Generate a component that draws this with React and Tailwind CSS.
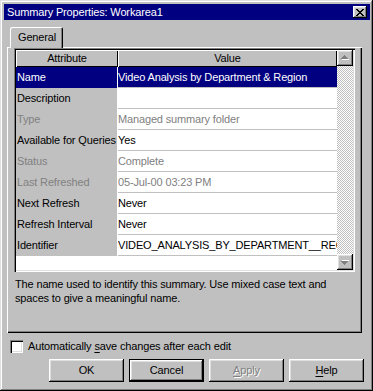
import React from 'react';

const rows = [
  { attr: 'Name', value: 'Video Analysis by Department & Region', selected: true },
  { attr: 'Description', value: '' },
  { attr: 'Type', value: 'Managed summary folder', dim: true },
  { attr: 'Available for Queries', value: 'Yes' },
  { attr: 'Status', value: 'Complete', dim: true },
  { attr: 'Last Refreshed', value: '05-Jul-00 03:23 PM', dim: true },
  { attr: 'Next Refresh', value: 'Never' },
  { attr: 'Refresh Interval', value: 'Never' },
  { attr: 'Identifier', value: 'VIDEO_ANALYSIS_BY_DEPARTMENT__REGION' },
];

const raised = 'shadow-[inset_-1px_-1px_#000,inset_1px_1px_#fff,inset_-2px_-2px_#808080,inset_2px_2px_#dfdfdf]';

const CloseGlyph = () => (
  <svg width="8" height="7" viewBox="0 0 8 7" shapeRendering="crispEdges">
    <path
      fill="#000"
      d="M0 0h2v1h-2z M6 0h2v1h-2z M1 1h2v1h-2z M5 1h2v1h-2z M2 2h4v1h-4z M3 3h2v1h-2z M2 4h4v1h-4z M1 5h2v1h-2z M5 5h2v1h-2z M0 6h2v1h-2z M6 6h2v1h-2z"
    />
  </svg>
);

// Disabled scroll arrow, grey with a white emboss
const Arrow = ({ down }) => (
  <svg width="9" height="6" viewBox="0 0 9 6" shapeRendering="crispEdges">
    <g transform={down ? 'translate(0 6) scale(1 -1)' : undefined}>
      <path fill="#fff" d="M4 1h1v1h1v1h1v1h1v1h-7v-1h1v-1h1v-1h1z" />
      <path fill="#808080" d="M3 0h1v1h1v1h1v1h1v1h-7v-1h1v-1h1v-1h1z" transform="translate(0 0)" />
    </g>
  </svg>
);

const Button = ({ children, isDefault, disabled }) => (
  <div className={`w-[75px] h-[23px] ${isDefault ? 'border border-black' : ''}`}>
    <div className={`w-full h-full flex items-center justify-center ${raised} ${disabled ? 'text-[#808080] [text-shadow:1px_1px_0_#fff]' : 'text-black'}`}>
      {children}
    </div>
  </div>
);

export default function App() {
  return (
    <div className="w-[373px] h-[391px] bg-[#c0c0c0] pt-[4px] pl-[4px] pr-[3px] shadow-[inset_-1px_-1px_#000,inset_1px_1px_#dfdfdf,inset_-2px_-2px_#808080,inset_2px_2px_#fff] font-['Liberation_Sans',Arial,sans-serif] text-[11px] leading-none text-black tracking-[-0.15px] overflow-hidden">
      {/* title bar */}
      <div className="h-[16px] bg-[#000080] flex items-center justify-between pl-[3px] pr-[3px]">
        <span className="text-white text-[11px]">Summary Properties: Workarea1</span>
        <div className={`w-[14px] h-[12px] bg-[#c0c0c0] flex items-center justify-center ${raised}`}>
          <CloseGlyph />
        </div>
      </div>

      {/* tab control */}
      <div className="mt-[7px] ml-[3px] w-[355px]">
        <div className="flex pl-[3px] h-[20px] relative z-10">
          <div className="w-[53px] h-[21px] bg-[#c0c0c0] rounded-t-[2px] shadow-[inset_1px_1px_#fff,inset_-1px_0_#000,inset_-2px_0_#808080] flex items-center pl-[8px] pb-[1px]">
            General
          </div>
        </div>
        <div className="h-[286px] pt-[1px] pl-[7px] shadow-[inset_1px_1px_#fff,inset_-1px_-1px_#000,inset_-2px_-2px_#808080]">
          {/* property grid */}
          <div className="w-[341px] h-[224px] p-[2px] flex shadow-[inset_1px_1px_#808080,inset_2px_2px_#000,inset_-1px_-1px_#fff,inset_-2px_-2px_#dfdfdf]">
            <div className="w-[321px] bg-white flex flex-col">
              <div className="flex h-[17px] bg-[#c0c0c0]">
                <div className="w-[102px] h-full flex items-center justify-center shadow-[inset_1px_1px_#fff,inset_-1px_-1px_#000]">Attribute</div>
                <div className="w-[219px] h-full flex items-center justify-center shadow-[inset_1px_1px_#fff,inset_-1px_-1px_#000]">Value</div>
              </div>
              {rows.map((r) => (
                <div key={r.attr} className="flex h-[21px]">
                  <div className={`w-[101px] h-full flex items-center pl-[1px] whitespace-nowrap overflow-hidden ${r.selected ? 'bg-[#000080] text-white' : 'bg-[#c0c0c0]'} ${r.dim ? 'text-[#808080]' : ''}`}>
                    {r.attr}
                  </div>
                  <div className="w-[220px] h-full border-l border-white flex flex-col">
                    <div className={`flex-1 flex items-center whitespace-nowrap overflow-hidden ${r.selected ? 'bg-[#000080] text-white' : 'bg-white'} ${r.dim ? 'text-[#808080]' : ''}`}>
                      {r.value}
                    </div>
                    <div className="h-[1px] bg-[#c0c0c0]" />
                  </div>
                </div>
              ))}
            </div>
            {/* scrollbar */}
            <div className="w-[16px] flex flex-col">
              <div className={`h-[16px] bg-[#c0c0c0] flex items-center justify-center ${raised}`}>
                <Arrow />
              </div>
              <div className="flex-1 bg-[image:repeating-conic-gradient(#c0c0c0_0_25%,#fff_0_50%)] bg-[length:2px_2px]" />
              <div className={`h-[16px] bg-[#c0c0c0] flex items-center justify-center ${raised}`}>
                <Arrow down />
              </div>
            </div>
          </div>
          <p className="mt-[5px] ml-[1px] leading-[14px]">
            The name used to identify this summary. Use mixed case text and
            <br />
            spaces to give a meaningful name.
          </p>
        </div>
      </div>

      {/* auto save option */}
      <div className="mt-[7px] ml-[6px] h-[13px] flex items-center gap-[5px]">
        <div className="w-[13px] h-[13px] bg-white shadow-[inset_1px_1px_#808080,inset_2px_2px_#000,inset_-1px_-1px_#fff,inset_-2px_-2px_#dfdfdf]" />
        <span>
          Automatically <span className="underline underline-offset-[2px]">s</span>ave changes after each edit
        </span>
      </div>

      {/* buttons */}
      <div className="mt-[6px] flex justify-end gap-[5px] pr-[6px]">
        <Button>OK</Button>
        <Button isDefault>Cancel</Button>
        <Button disabled>
          <span><span className="underline underline-offset-[2px]">A</span>pply</span>
        </Button>
        <Button>
          <span><span className="underline underline-offset-[2px]">H</span>elp</span>
        </Button>
      </div>
    </div>
  );
}
